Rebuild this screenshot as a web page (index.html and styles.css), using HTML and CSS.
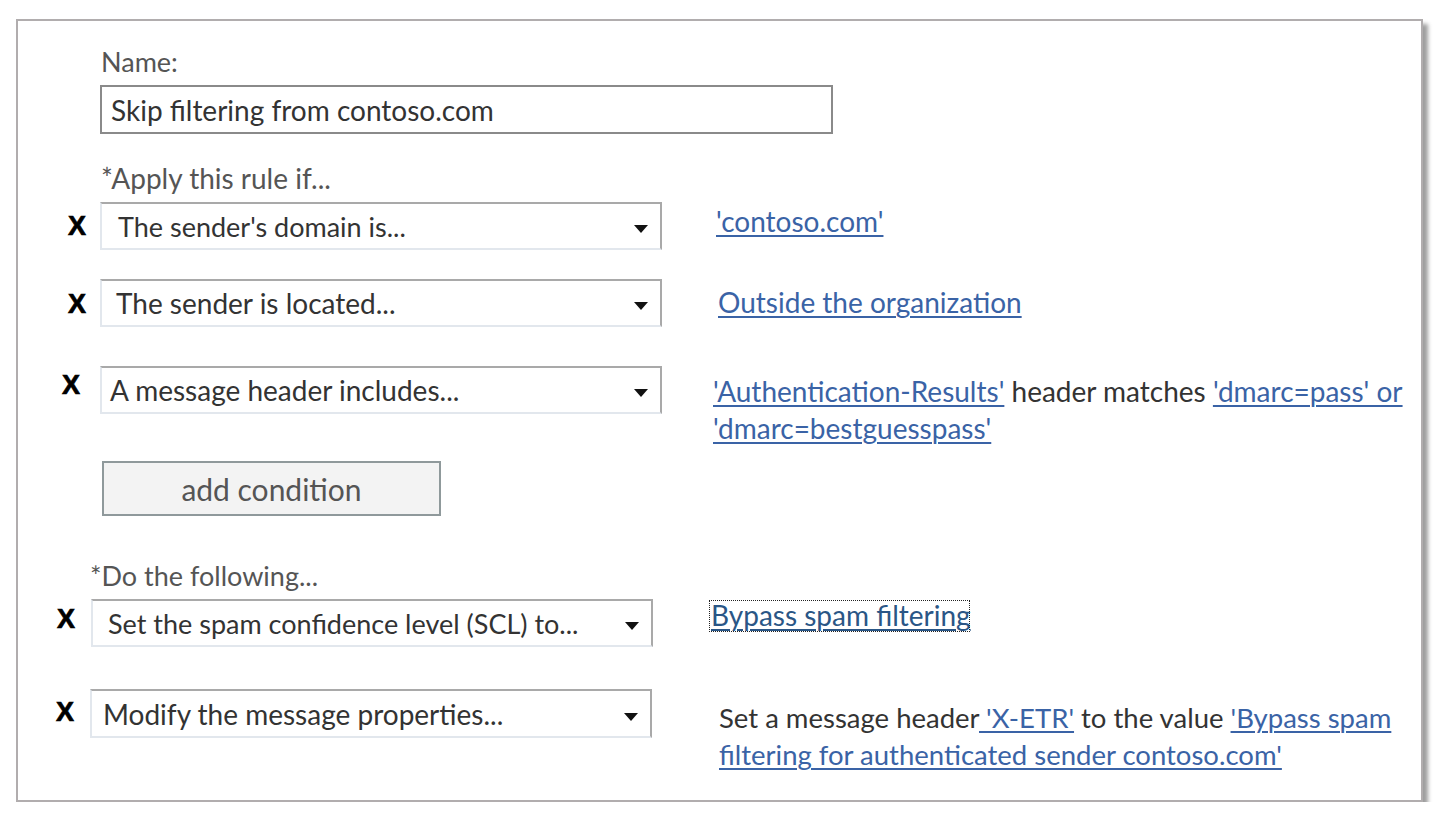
FILE: index.html
```html
<!DOCTYPE html>
<html lang="en">
<head>
<meta charset="utf-8">
<title>Skip filtering from contoso.com</title>
<link rel="stylesheet" href="styles.css">
</head>
<body>
<div class="panel">
  <div class="name-field">
    <div class="label">Name:</div>
    <div class="textbox">Skip filtering from contoso.com</div>
  </div>

  <div class="section conditions">
    <div class="label label-apply">*Apply this rule if...</div>

    <div class="rule rule-domain">
      <span class="x">X</span>
      <div class="select"><span>The sender's domain is...</span><span class="arrow"></span></div>
      <div class="value"><a class="link" href="#">'contoso.com'</a></div>
    </div>

    <div class="rule rule-location">
      <span class="x">X</span>
      <div class="select"><span>The sender is located...</span><span class="arrow"></span></div>
      <div class="value"><a class="link" href="#">Outside the organization</a></div>
    </div>

    <div class="rule rule-header">
      <span class="x">X</span>
      <div class="select"><span>A message header includes...</span><span class="arrow"></span></div>
      <div class="value"><a class="link" href="#">'Authentication-Results'</a> header matches <a class="link" href="#">'dmarc=pass' or<br>'dmarc=bestguesspass'</a></div>
    </div>

    <button class="add-btn" type="button">add condition</button>
  </div>

  <div class="section actions">
    <div class="label label-do">*Do the following...</div>

    <div class="rule rule-scl">
      <span class="x">X</span>
      <div class="select"><span>Set the spam confidence level (SCL) to...</span><span class="arrow"></span></div>
      <div class="value"><span class="focus-box"><a class="link focus-link" href="#">Bypass spam filtering</a></span></div>
    </div>

    <div class="rule rule-props">
      <span class="x">X</span>
      <div class="select"><span>Modify the message properties...</span><span class="arrow"></span></div>
      <div class="value">Set a message header<a class="link" href="#"> 'X-ETR'</a> to the value <a class="link" href="#">'Bypass spam<br>filtering for authenticated sender contoso.com'</a></div>
    </div>
  </div>
</div>
</body>
</html>
```
FILE: styles.css
```css
* { box-sizing: border-box; }

body {
  margin: 0;
  background: #ffffff;
  font-family: Lato, "Open Sans", sans-serif;
  color: #333333;
}

.panel {
  margin: 19px 0 0 16px;
  width: 1407px;
  height: 783px;
  border: 2px solid #b1adae;
  box-shadow: 5px 5px 4px rgba(0, 0, 0, 0.38);
  padding-top: 24px;
  background: #ffffff;
}

.label {
  font-size: 28px;
  line-height: 34px;
  color: #555555;
  white-space: nowrap;
}

.name-field { margin-left: 82px; }
.name-field .label { padding-left: 1px; font-size: 27px; }

.textbox {
  width: 733px;
  height: 49px;
  margin-top: 6px;
  border: 2px solid #8a8a8a;
  padding-left: 9px;
  display: flex;
  align-items: center;
  font-size: 28px;
  color: #333333;
}

.conditions { margin-top: 27px; }
.label-apply { padding-left: 83px; margin-bottom: 7px; }

.rule {
  display: flex;
  align-items: flex-start;
}

.x {
  flex: none;
  font-family: "Liberation Sans", Arial, sans-serif;
  font-weight: bold;
  font-size: 27px;
  line-height: 25px;
  color: #000000;
  -webkit-text-stroke: 0.7px #000000;
}

.select {
  flex: none;
  width: 562px;
  height: 48px;
  display: flex;
  align-items: center;
  justify-content: space-between;
  padding-right: 12px;
  border-top: 2px solid #a9a9a9;
  border-right: 2px solid #a9a9a9;
  border-left: 2px solid #e2e7ed;
  border-bottom: 2px solid #e2e7ed;
  font-size: 28px;
  color: #333333;
  white-space: nowrap;
}

.arrow {
  width: 0;
  height: 0;
  margin-top: 6px;
  border-left: 7px solid transparent;
  border-right: 7px solid transparent;
  border-top: 8px solid #111111;
}

.value {
  font-size: 28px;
  line-height: 37px;
  color: #333333;
  white-space: nowrap;
}

.link {
  color: #3a63a6;
  text-decoration: underline;
  text-decoration-thickness: 2px;
  text-underline-offset: 3px;
}

/* per-row placement */
.rule-domain { margin-left: 50px; }
.rule-domain .x { width: 32px; padding-top: 12px; }
.rule-domain .select { padding-left: 16px; font-size: 27px; }
.rule-domain .value { margin-left: 54px; margin-top: 1px; }

.rule-location { margin-left: 50px; margin-top: 29px; }
.rule-location .x { width: 32px; padding-top: 13px; }
.rule-location .select { padding-left: 14px; }
.rule-location .value { margin-left: 56px; margin-top: 5px; }

.rule-header { margin-left: 44px; margin-top: 39px; }
.rule-header .x { width: 38px; padding-top: 7px; }
.rule-header .select { padding-left: 8px; }
.rule-header .value { margin-left: 51px; margin-top: 7px; }

.add-btn {
  display: block;
  margin: 14px 0 0 84px;
  width: 339px;
  height: 55px;
  border: 2px solid #8f999b;
  background: #f3f3f3;
  font-family: Lato, "Open Sans", sans-serif;
  font-size: 30px;
  color: #555555;
  padding: 0;
}

.actions { margin-top: 43px; }
.label-do { padding-left: 72px; margin-bottom: 6px; font-size: 27px; }

.rule-scl { margin-left: 39px; }
.rule-scl .x { width: 34px; padding-top: 8px; }
.rule-scl .select { padding-left: 15px; font-size: 27px; }
.rule-scl .value { margin-left: 57px; margin-top: 2px; line-height: 30px; }

.rule-props { margin-left: 38px; margin-top: 42px; }
.rule-props .x { width: 34px; padding-top: 11px; }
.rule-props .select { padding-left: 11px; height: 49px; }
.rule-props .value { margin-left: 67px; margin-top: 10px; font-size: 27.5px; }

.focus-box {
  display: block;
  width: 259px;
  height: 30px;
  outline: 1px dotted #222222;
  line-height: 28px;
  padding-left: 1px;
}

.focus-link {
  font-size: 28px;
  color: #2a5686;
}
```
